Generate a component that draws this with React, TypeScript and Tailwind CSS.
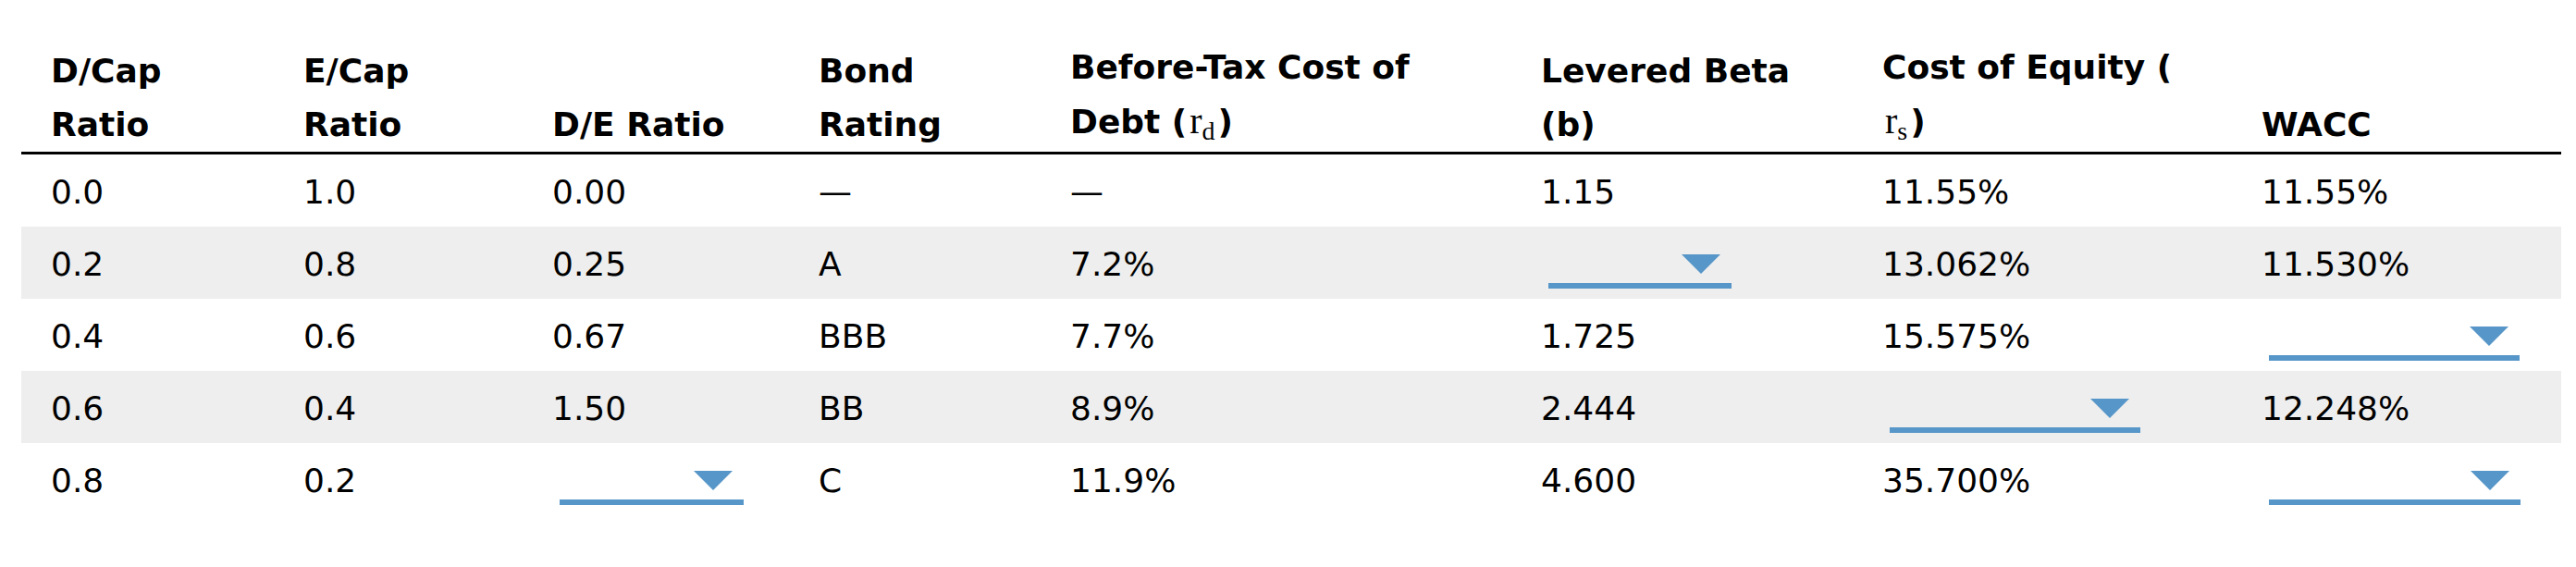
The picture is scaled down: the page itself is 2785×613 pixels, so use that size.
const cols = "grid grid-cols-[273px_269px_288px_272px_509px_369px_410px_356px]";

type Cell = string | { dd: number };

const rows: Cell[][] = [
  ["0.0", "1.0", "0.00", "—", "—", "1.15", "11.55%", "11.55%"],
  ["0.2", "0.8", "0.25", "A", "7.2%", { dd: 198 }, "13.062%", "11.530%"],
  ["0.4", "0.6", "0.67", "BBB", "7.7%", "1.725", "15.575%", { dd: 271 }],
  ["0.6", "0.4", "1.50", "BB", "8.9%", "2.444", { dd: 271 }, "12.248%"],
  ["0.8", "0.2", { dd: 199 }, "C", "11.9%", "4.600", "35.700%", { dd: 272 }],
];

function Dropdown({ width }: { width: number }) {
  return (
    <div className="ml-[8px] flex h-[56px] flex-col justify-end" style={{ width }}>
      <div className="flex justify-end pr-[12px]">
        <svg width="42" height="21" viewBox="0 0 42 21">
          <polygon points="0,0 42,0 21,21" fill="#5796c8" />
        </svg>
      </div>
      <div className="mt-[10px] h-[6px] bg-[#5796c8]" />
    </div>
  );
}

function Sub({ base, sub }: { base: string; sub: string }) {
  return (
    <span className="px-[3px] font-['Liberation_Serif',serif] font-normal">
      <span className="text-[40px]">{base}</span>
      <span className="relative top-[7px] text-[28px]">{sub}</span>
    </span>
  );
}

export default function App() {
  return (
    <div className="min-h-screen bg-white pl-[23px] font-['DejaVu_Sans',Verdana,sans-serif] text-[36px] text-black">
      <div className="w-[2746px]">
        <div className={`${cols} h-[167px] items-end border-b-[3px] border-black font-bold leading-[58px]`}>
          <div className="pl-[32px]">D/Cap<br />Ratio</div>
          <div className="pl-[32px]">E/Cap<br />Ratio</div>
          <div className="pl-[32px]">D/E Ratio</div>
          <div className="pl-[32px]">Bond<br />Rating</div>
          <div className="pl-[32px]">
            Before-Tax Cost of
            <br />
            Debt (<Sub base="r" sub="d" />)
          </div>
          <div className="pl-[32px]">Levered Beta<br />(b)</div>
          <div className="pl-[32px]">
            Cost of Equity (
            <br />
            <Sub base="r" sub="s" />)
          </div>
          <div className="pl-[32px]">WACC</div>
        </div>
        {rows.map((row, i) => (
          <div
            key={i}
            className={`${cols} h-[78px] items-center leading-[52px] ${i % 2 === 1 ? "bg-[#eeeeee]" : ""}`}
          >
            {row.map((c, j) =>
              typeof c === "string" ? (
                <div key={j} className="pl-[32px] pt-[3px]">{c}</div>
              ) : (
                <div key={j} className="pl-[32px]">
                  <Dropdown width={c.dd} />
                </div>
              )
            )}
          </div>
        ))}
      </div>
    </div>
  );
}
